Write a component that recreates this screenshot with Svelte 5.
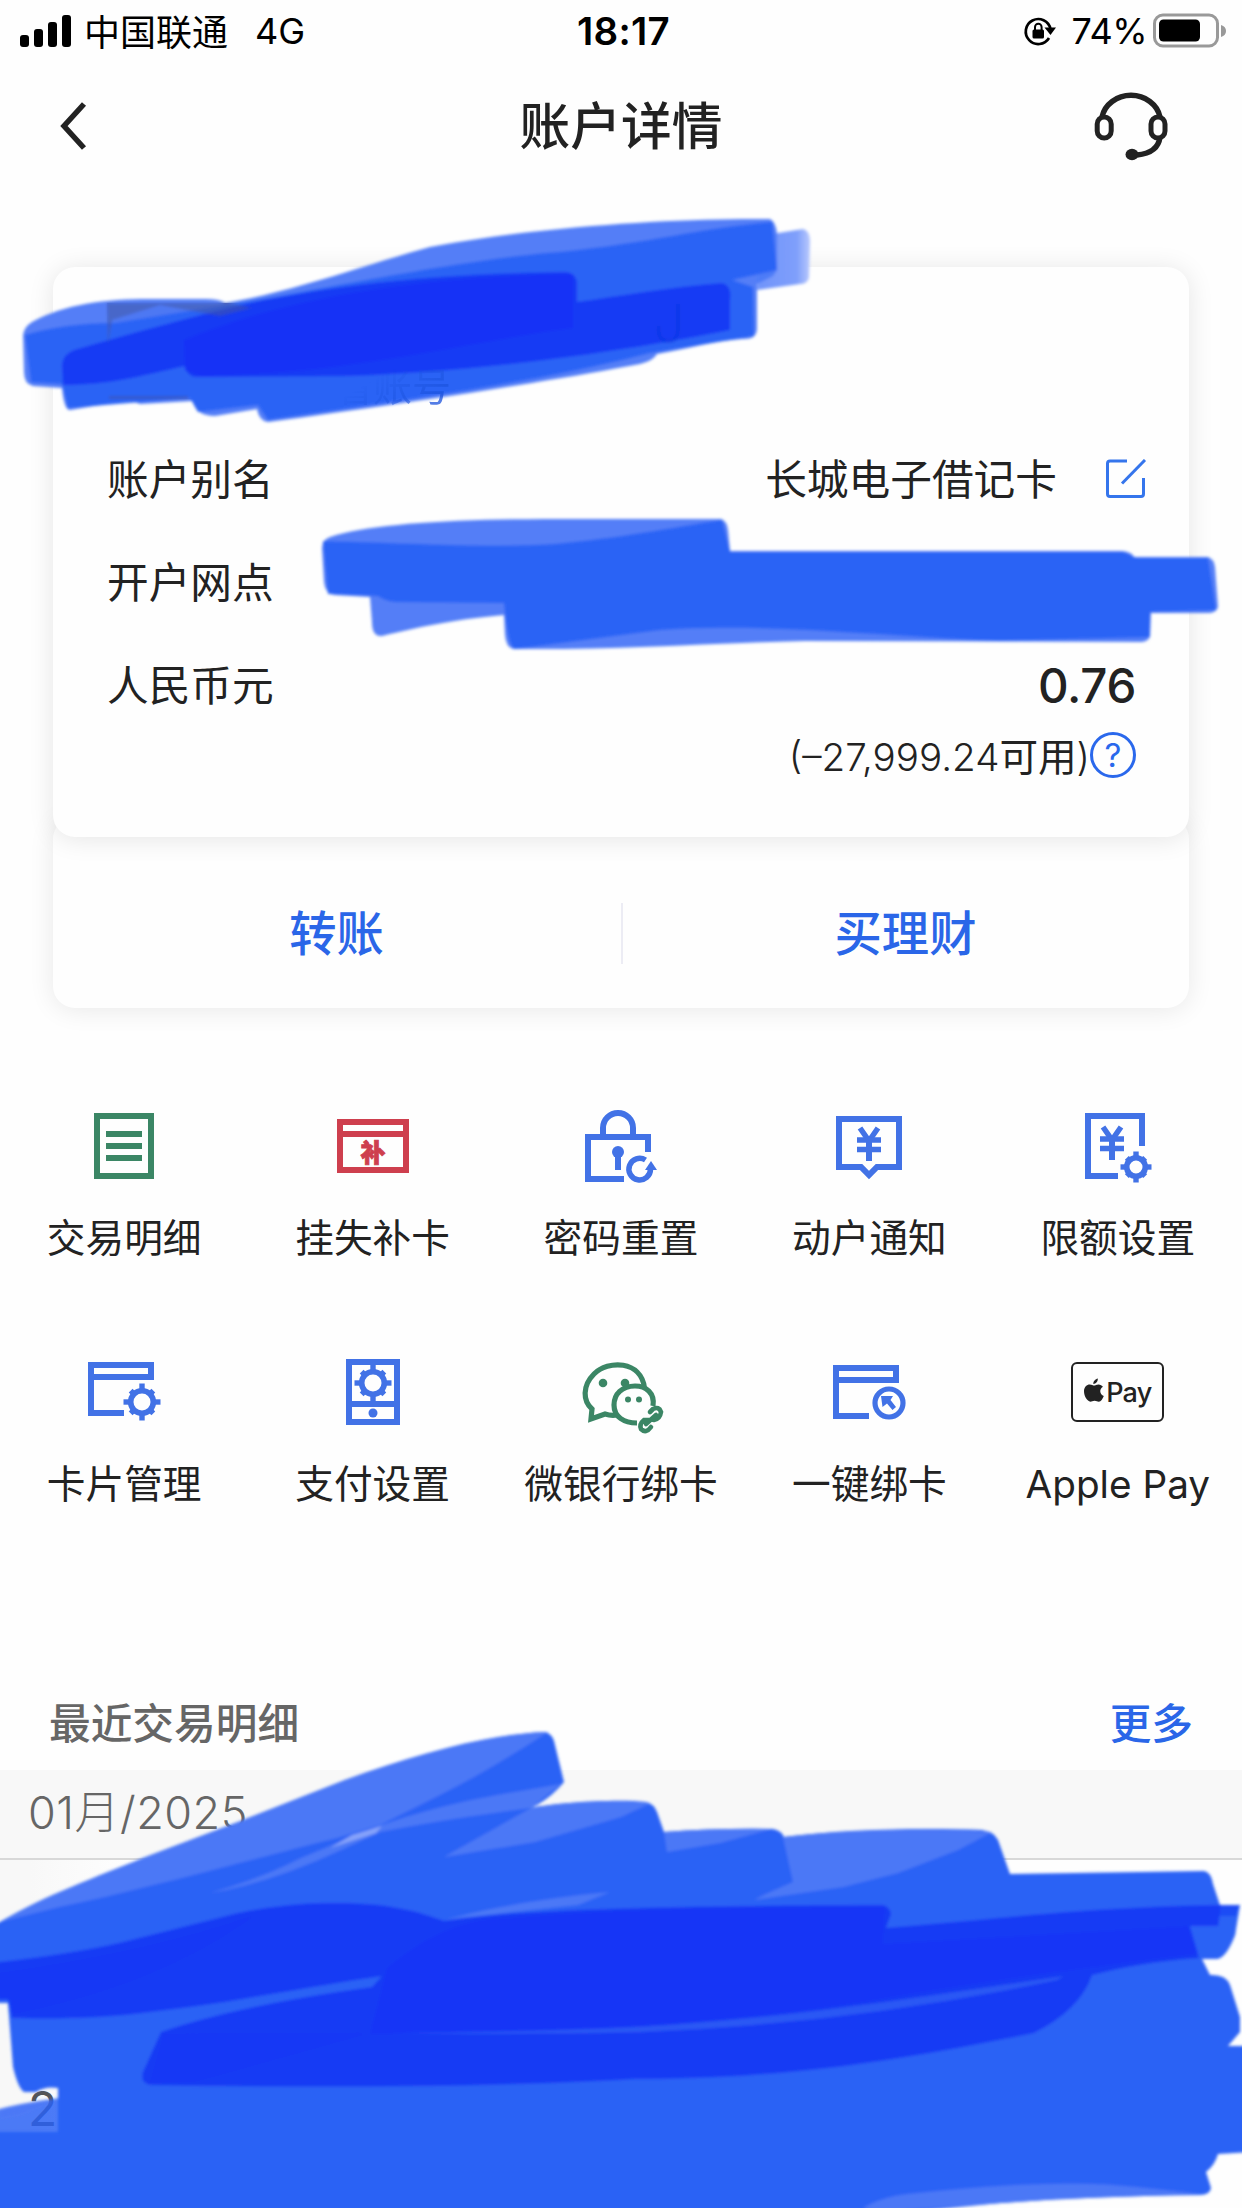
<script lang="ts">
	type Shortcut = { icon: string; label: string };

	const shortcuts: Shortcut[] = [
		{ icon: 'detail', label: '交易明细' },
		{ icon: 'loss', label: '挂失补卡' },
		{ icon: 'reset', label: '密码重置' },
		{ icon: 'notice', label: '动户通知' },
		{ icon: 'limit', label: '限额设置' },
		{ icon: 'card', label: '卡片管理' },
		{ icon: 'payment', label: '支付设置' },
		{ icon: 'wechat', label: '微银行绑卡' },
		{ icon: 'bind', label: '一键绑卡' },
		{ icon: 'apple', label: 'Apple Pay' },
	];

	const teeth = [0, 45, 90, 135, 180, 225, 270, 315];
</script>

{#snippet gear(cx: number, cy: number, r: number, reach: number)}
	<g transform="translate({cx} {cy})">
		<circle {r} stroke-width="5.6" />
		{#each teeth as angle}
			<path
				d="M0 {-r - 1}V{-(angle % 90 ? reach - 2.5 : reach)}"
				stroke-width="5.4"
				transform="rotate({angle})"
			/>
		{/each}
	</g>
{/snippet}

{#snippet yen(x: number, y: number)}
	<g transform="translate({x} {y})">
		<path d="M-9 -1L0 12L9 -1" stroke-width="5.500" />
		<path d="M-12 11H12M-12 20.500H12" stroke-width="5.500" />
		<path d="M0 11V32" stroke-width="6" />
	</g>
{/snippet}

<div class="page">
	<div class="status">
		<div class="carrier">
			<svg width="54" height="32" viewBox="0 0 54 32">
				<rect x="0" y="20" width="9" height="12" rx="3" />
				<rect x="14" y="14" width="9" height="18" rx="3" />
				<rect x="28" y="7" width="9" height="25" rx="3" />
				<rect x="42" y="0" width="9" height="32" rx="3" />
			</svg>
			<span class="operator">中国联通</span>
			<span class="network">4G</span>
		</div>
		<div class="clock">18:17</div>
		<div class="power">
			<svg width="34" height="34" viewBox="0 0 34 34" fill="none" stroke="#000" stroke-width="2.700">
				<path d="M27 24A12.500 12.500 0 1 1 28.500 15" />
				<path d="M22.500 13.500H34L28.500 21Z" fill="#000" stroke="none" />
				<rect x="10.500" y="15.500" width="11.500" height="9" rx="1.500" fill="#000" stroke="none" />
				<path d="M13 16V13a3.300 3.300 0 0 1 6.600 0V16" stroke-width="2" />
			</svg>
			<span>74%</span>
			<svg width="75" height="36" viewBox="0 0 75 36">
				<rect x="2.500" y="2" width="63" height="31" rx="8.500" fill="none" stroke="#999" stroke-width="3" />
				<rect x="7" y="6.500" width="41" height="22" rx="4.500" />
				<path d="M69 12q5 1.500 5 6t-5 6z" fill="#999" />
			</svg>
		</div>
	</div>

	<header class="nav">
		<svg width="32" height="52" viewBox="0 0 32 52" fill="none" stroke="#222" stroke-width="5.500">
			<path d="M25 4L5 26L25 48" />
		</svg>
		<h1>账户详情</h1>
		<svg class="headset" width="76" height="72" viewBox="0 0 76 72" fill="none" stroke="#222">
			<path d="M9 27A29.500 26.500 0 0 1 67 27" stroke-width="5.500" />
			<rect x="4.200" y="27" width="14" height="21" rx="7" stroke-width="5" />
			<rect x="58" y="27" width="14" height="21" rx="7" stroke-width="5" />
			<path d="M67 47Q65 63 44 65" stroke-width="5.500" />
			<ellipse cx="39" cy="64.500" rx="6.500" ry="5.800" fill="#222" stroke="none" />
		</svg>
	</header>

	<section class="account">
		<div class="summary">
			<div class="thumb"></div>
			<span class="reveal">查看账号</span>
		</div>
		<div class="row">
			<span class="name">账户别名</span>
			<span class="alias">
				<span class="name">长城电子借记卡</span>
				<svg width="42" height="42" viewBox="0 0 42 42" fill="none" stroke="#3575ec" stroke-width="3">
					<path d="M22 2H5Q2.500 2 2.500 4.500V35Q2.500 37.500 5 37.500H36Q38.500 37.500 38.500 35V19" />
					<path d="M17 24.500L40 1" />
				</svg>
			</span>
		</div>
		<div class="row"><span class="name">开户网点</span></div>
		<div class="row">
			<span class="name">人民币元</span>
			<span class="amount">0.76</span>
		</div>
		<div class="available">
			<span class="name">(–27,999.24<b>可用</b>)</span>
			<span class="help">?</span>
		</div>
	</section>

	<div class="actions">
		<span>转账</span>
		<i></i>
		<span>买理财</span>
	</div>

	<div class="shortcuts">
		{#each shortcuts as item}
			<div class="shortcut">
				{#if item.icon === 'apple'}
					<div class="apple-slot">
						<div class="apple-pay">
							<svg width="20" height="25" viewBox="0 0 21 25" fill="#222">
								<path d="M14.500 0c.3 3-2 5.700-4.700 5.700C9.500 3 12 .4 14.500 0zM10.700 7.300c1.200 0 2.400-1.200 4.500-1.200 2 0 3.800 1 4.700 2.500-4.200 2.400-3.500 8 .9 9.700-1.200 3-3 5.900-5.200 5.900-1.700 0-2.400-1-4.500-1-2 0-2.900 1-4.400 1C3.500 24.200 0 18.500 0 13.400 0 8.700 3 6.200 6 6.200c2 0 3.500 1.100 4.700 1.100z" />
							</svg>
							<span>Pay</span>
						</div>
					</div>
				{:else}
					<svg class="icon {item.icon}" viewBox="0 0 84 84" fill="none" stroke="currentColor" stroke-width="6">
						{#if item.icon === 'detail'}
							<path d="M15 12H69V72H15ZM24 30H60M24 42H60M24 54H60" />
						{:else if item.icon === 'loss'}
							<path d="M9 18H75V66H9ZM9 30H75" />
							<text x="42" y="58" text-anchor="middle">补</text>
						{:else if item.icon === 'reset'}
							<path d="M24 32V24A15 15 0 0 1 54 24V32" />
							<path d="M69 48V33H9V75H45" />
							<circle cx="39" cy="48" r="6" fill="currentColor" stroke="none" />
							<path d="M39 48V66" />
							<path d="M66.500 56A10.800 10.800 0 1 0 71.500 65" stroke-width="5.500" />
							<path d="M72 57L78 66H66Z" fill="currentColor" stroke="none" />
						{:else if item.icon === 'notice'}
							<path d="M12 15H72V63H50L42 71L34 63H12Z" />
							{@render yen(42, 25)}
						{:else if item.icon === 'limit'}
							<path d="M66 42V12H12V72H42" />
							{@render yen(36, 24)}
							{@render gear(60, 63, 9.3, 15.5)}
						{:else if item.icon === 'card'}
							<path d="M42 63H9V15H69V27H9" />
							{@render gear(60, 52, 11.3, 18.5)}
						{:else if item.icon === 'payment'}
							<path d="M18 12H66V72H18ZM18 54H66" />
							<circle cx="42" cy="63" r="4.500" fill="currentColor" stroke="none" />
							{@render gear(42, 33, 11.3, 18.5)}
						{:else if item.icon === 'wechat'}
							<path d="M65.500 38C62 10 29 10 15 24C3 36 4 51 13 59L12 69L26 64Q32 66 38 65" stroke-width="5.200" />
							<path d="M74 56C76 43 67 36 56 36C43 36 35 44 35 55C35 67 45 73 58 73" stroke-width="5.200" />
							<path d="M71 62L74 59Q80 56 82 62Q81 69 75 70M77 65L67 74M72 70L65 70Q60 74 62 79Q67 84 72 77" stroke-width="4.600" stroke-linecap="round" />
							<g fill="currentColor" stroke="none">
								<circle cx="24" cy="33" r="4.300" /><circle cx="46" cy="33" r="4.300" />
								<circle cx="49" cy="49.500" r="3" /><circle cx="60" cy="49.500" r="3" />
							</g>
						{:else}
							<path d="M42 66H9V18H69V30H9" />
							<circle cx="62" cy="53" r="14" stroke-width="5.200" />
							<path d="M54 46H66L63.500 50L69 57L65.500 60L60 53.500L55.500 57Z" fill="currentColor" stroke="none" />
						{/if}
					</svg>
				{/if}
				<span class="label">{item.label}</span>
			</div>
		{/each}
	</div>

	<section class="recent">
		<div class="recent-head">
			<span>最近交易明细</span>
			<span class="more">更多</span>
		</div>
		<div class="month">01月/2025</div>
		<div class="records"><span>2</span></div>
	</section>

	<!-- marker strokes over the private fields -->
	<svg class="marker" viewBox="0 0 1242 2208">
		<defs>
			<filter id="edge"><feGaussianBlur stdDeviation="1.800" /></filter>
			<linearGradient id="tail">
				<stop offset="0" stop-color="#6f93fa" />
				<stop offset="0.75" stop-color="#7f9ffb" />
				<stop offset="1" stop-color="#b9c9fd" />
			</linearGradient>
		</defs>
		<g filter="url(#edge)">
			<path fill="url(#tail)" d="M760 236L803 229Q811 231 810 245L809 278Q807 284 800 284L757 290Z" />
			<path class="light" d="M23 335Q24 327 32 322C65 304 105 299 150 299H205Q220 299 225 303C290 293 380 260 430 247C540 226 680 218 770 219Q776 222 777 234V270L773 276L757 284L757 330Q756 340 742 339C715 341 690 348 657 354Q653 361 640 364C540 383 400 404 268 422Q259 421 257 409L215 416Q196 416 193 401L140 404L130 400L70 410Q64 410 62 388L33 386Q24 384 24 372Z" />
			<path class="mid" d="M25 335Q65 323 115 323L220 306C310 292 460 259 560 252C650 243 700 228 772 222L777 270L732 280L753 287L754 336L650 353C540 382 400 401 268 420L258 405L198 412L190 398L68 408L62 384L31 382Z" />
			<path class="dark" d="M62 365Q63 354 74 350C120 337 185 318 250 303C340 285 430 274 565 272Q575 272 577 282V302C620 296 670 287 722 283Q732 285 730 300V330C630 350 500 370 350 376L200 377Q187 378 185 366C140 376 110 385 63 385Z" />
			<path class="deep" d="M185 370L184 340C280 300 410 276 573 274V328C480 339 350 375 200 376Z" />
			<path fill="#4355a0" opacity=".5" d="M107 303H230L252 308L220 316L160 305L112 320L108 345Z" />
			<path fill="#4150a0" opacity=".5" d="M109 396H188V399H109Z" />
			<path fill="none" stroke="#0c35df" stroke-width="4" opacity=".5" d="M678 304V328Q678 342 667 341Q657 340 659 326" />

			<path class="light" d="M322 548Q322 540 330 537C370 524 450 519 560 519H721Q727 521 728 530L730 551H1122Q1132 552 1134 557H1208Q1214 559 1215 567L1218 607Q1216 613 1208 613H1151L1150 636Q1149 641 1142 642L804 641C710 643 620 650 513 649Q506 647 505 635L504 615C450 620 420 627 382 636Q372 637 372 622L370 597L335 595Q325 594 324 582Z" />
			<path class="mid" d="M323 541C430 544 490 548 555 544C620 538 670 528 722 520L730 552H1124L1136 558H1208L1216 610L1150 612V637L1000 641C890 637 760 622 660 630L515 649Q508 648 504 603L395 602Q385 601 378 596L328 594Z" />

			<path class="base" d="M-9 1926L0 1922C50 1893 95 1878 143 1858L238 1822L345 1780C420 1753 490 1734 545 1732Q552 1734 554 1741L564 1782Q550 1799 531 1808C560 1802 620 1799 646 1802Q654 1804 657 1812L664 1832Q720 1828 773 1829Q782 1831 784 1837C850 1829 920 1828 982 1830Q994 1832 998 1840L1010 1874L1204 1871Q1211 1872 1213 1884L1220 1905H1240L1235 1935Q1226 1959 1216 1959H1202L1210 1975Q1226 1974 1230 1985L1240 2017V2032L1228 2046H1251V2152L1218 2154Q1215 2165 1206 2172L1211 2188Q1210 2195 1200 2195Q1100 2196 1000 2203L860 2217H-9V2132H58V2088Q45 2086 36 2092H24Q18 2088 13 2067L8 2003H-9Z" />
			<path class="base" opacity=".84" d="M-9 2111Q20 2103 60 2098V2134H-9Z" />
			<path class="tint" d="M0 1922C50 1893 95 1878 143 1858L238 1822L345 1780C420 1753 490 1734 548 1732Q490 1770 436 1797L380 1825L337 1838C240 1862 150 1888 59 1907L15 1918Z" />
			<path class="tint" d="M210 1893Q260 1879 301 1858L376 1827Q440 1804 515 1792L561 1784L531 1808Q450 1818 380 1832L341 1850Q270 1883 210 1893Z" />
			<path fill="#86a3fa" d="M330 1848L352 1835L382 1826L376 1833Z" />
			<path class="tint" d="M531 1808C560 1802 620 1799 651 1803L621 1817L535 1842L444 1857Z" />
			<path class="tint" d="M664 1832Q720 1828 771 1829L720 1843L667 1852ZM783 1837C850 1829 930 1828 992 1832L958 1850L898 1873L843 1887L754 1900L768 1893L793 1882Z" />
			<path class="tint" d="M444 1920Q520 1900 610 1892L578 1905Q500 1913 444 1920ZM863 2208Q885 2195 918 2193Q1060 2178 1136 2187L1203 2194L1057 2199L880 2212ZM0 2110L52 2101L22 2114L0 2118Z" />
			<path class="dark" d="M-9 1964L0 1962Q70 1954 119 1943L238 1913Q290 1902 337 1903C390 1903 420 1912 444 1921C520 1909 650 1906 883 1905Q890 1907 891 1914L886 1928C990 1920 1100 1905 1240 1905L1220 1926H1188L1199 1958C1155 1961 1120 1968 1092 1975Q1080 2010 1034 2033C900 2060 800 2078 634 2079C500 2087 330 2088 150 2085Q140 2083 143 2072L161 2032Q240 2005 372 1987L382 1976C300 1988 230 2003 158 2011C100 2019 50 2019 12 2018L8 1999H-9Z" />
			<path fill="#2962f5" d="M1221 1905H1239L1235 1935Q1226 1957 1214 1958H1200L1189 1927H1218Z" />
			<path class="dark" opacity=".55" d="M1215 1905H1239L1236 1916H1220Z" />
			<path class="deep" d="M370 2034L387 1968Q430 1930 480 1920Q640 1906 885 1907L883 1944L1190 1926L1198 1954Q1000 1978 870 2001Q650 2035 370 2034Z" opacity=".8" />
			<path class="deep" d="M0 1973Q150 1952 255 1915Q160 1985 12 2014V2000H0ZM164 2034L370 2033L190 2083H150Z" opacity=".5" />
			<path fill="#2959f4" d="M385 2033C520 2032 620 2029 680 2024C820 2014 940 1994 1064 1976L1057 1980Q850 2024 640 2032Q500 2035 385 2033Z" />
		</g>
	</svg>
</div>

<style>
	:global(body) {
		background: #fefefe;
	}

	.page {
		position: relative;
		isolation: isolate;
		height: 2208px;
		overflow: hidden;
		background: #fefefe;
		color: #222;
		font-family: Inter, 'Noto Sans CJK SC', sans-serif;
		font-size: 41.7px;
	}

	.status {
		display: grid;
		grid-template-columns: 1fr auto 1fr;
		align-items: center;
		height: 62px;
		padding: 0 15px 0 20px;
		color: #000;
		font-size: 36px;
	}

	.carrier,
	.power {
		display: flex;
		align-items: center;
	}

	.carrier .operator {
		margin-left: 10px;
		padding-bottom: 3px;
	}

	.carrier .network {
		margin-left: 27px;
	}

	.clock {
		font-size: 38.5px;
		font-weight: 600;
		letter-spacing: 0.3px;
	}

	.power {
		justify-content: flex-end;
	}

	.power span {
		margin: 0 5px 0 16px;
		letter-spacing: -0.5px;
	}

	.nav {
		display: flex;
		align-items: center;
		justify-content: space-between;
		height: 128px;
		padding: 0 73px 0 59px;
	}

	.nav h1 {
		margin: 0 0 0 58px;
		padding-bottom: 7px;
		font-size: 50.7px;
		font-weight: 500;
	}

	.headset {
		overflow: visible;
	}

	.account {
		box-sizing: border-box;
		height: 570px;
		margin: 77px 53px 0;
		padding: 0 54px;
		border-radius: 22px;
		background: #fefefe;
		box-shadow: 0 2px 26px rgba(0, 0, 0, 0.1);
	}

	.summary {
		display: flex;
		align-items: flex-end;
		gap: 36px;
		height: 161px;
	}

	.thumb {
		width: 152px;
		height: 96px;
		margin-bottom: 29px;
		background: #5a5f9a;
	}

	/* only the lower edge of the link shows through the marker */
	.reveal {
		position: relative;
		z-index: 3;
		margin-bottom: 17px;
		color: #1b52dc;
		font-size: 39px;
		line-height: 48px;
		opacity: 0.75;
		mask-image: linear-gradient(150deg, transparent 45%, #000 85%);
	}

	.row {
		display: flex;
		align-items: center;
		justify-content: space-between;
		height: 103px;
	}

	.name {
		padding-bottom: 6px;
	}

	.alias {
		display: flex;
		align-items: center;
		gap: 48px;
		margin-right: -12px;
	}

	.amount {
		margin-right: -1px;
		font-size: 47.5px;
		font-weight: 500;
		letter-spacing: -0.3px;
	}

	.available {
		display: flex;
		align-items: center;
		justify-content: flex-end;
		height: 36px;
		margin-right: -1px;
		font-size: 38.6px;
		font-weight: 300;
	}

	.available .name {
		padding-bottom: 3px;
	}

	.available b {
		font-weight: 400;
	}

	.help {
		box-sizing: border-box;
		width: 46px;
		height: 46px;
		border: 3px solid #2a68ec;
		border-radius: 50%;
		color: #2a68ec;
		font-size: 33px;
		font-weight: 400;
		line-height: 41px;
		text-align: center;
	}

	.actions {
		position: relative;
		z-index: -1;
		display: flex;
		align-items: center;
		box-sizing: border-box;
		height: 191px;
		margin: -20px 53px 0;
		padding-top: 42px;
		border-radius: 22px;
		box-shadow: 0 2px 26px rgba(0, 0, 0, 0.09);
		color: #2a66e8;
		font-size: 47.3px;
		font-weight: 500;
	}

	.actions span {
		flex: 1;
		padding-bottom: 6px;
		text-align: center;
	}

	.actions i {
		width: 2px;
		height: 61px;
		margin: 0 -1px 0 1px;
		background: #ececf4;
	}

	.shortcuts {
		display: grid;
		grid-template-columns: repeat(5, 1fr);
		grid-auto-rows: 246px;
		margin-top: 96px;
	}

	.shortcut {
		display: flex;
		flex-direction: column;
		align-items: center;
	}

	.icon {
		width: 84px;
		height: 84px;
		overflow: visible;
		color: #4272e6;
	}

	.icon.detail,
	.icon.wechat {
		color: #3b8665;
	}

	.icon.loss {
		color: #ce3f4e;
	}

	.icon text {
		fill: currentColor;
		stroke: currentColor;
		stroke-width: 0.8;
		font-size: 25px;
		font-weight: 900;
	}

	.apple-slot {
		display: grid;
		place-items: center;
		height: 84px;
	}

	.apple-pay {
		display: flex;
		align-items: center;
		justify-content: center;
		gap: 2px;
		box-sizing: border-box;
		width: 93px;
		height: 60px;
		border: 2.5px solid #222;
		border-radius: 6px;
		font-size: 27px;
		font-weight: 500;
		letter-spacing: -0.8px;
	}

	.apple-pay svg {
		margin-bottom: 3px;
	}

	.label {
		margin-top: 26px;
		font-size: 38.7px;
		line-height: 48px;
		white-space: nowrap;
	}

	.recent {
		margin-top: 80px;
	}

	.recent-head {
		display: flex;
		align-items: center;
		justify-content: space-between;
		box-sizing: border-box;
		height: 94px;
		padding: 0 49px 5px;
		color: #666;
		font-weight: 500;
	}

	.more {
		color: #2a66e8;
	}

	.month {
		box-sizing: border-box;
		height: 90px;
		padding-left: 28px;
		border-bottom: 2.5px solid #d8d8d8;
		background: #f8f8f8;
		color: #666;
		font-size: 45px;
		font-weight: 300;
		letter-spacing: 0.5px;
		line-height: 86px;
	}

	.records {
		box-sizing: border-box;
		height: 348px;
		padding: 219px 0 0 28px;
		background: linear-gradient(90deg, #f8f8f8 30px, #fefefe 130px);
		color: #555;
		font-size: 48px;
	}

	.marker {
		position: absolute;
		inset: 0;
		z-index: 2;
		width: 1242px;
		height: 2208px;
		pointer-events: none;
	}

	.light {
		fill: #4c7af7;
		fill-opacity: 0.96;
	}

	.mid {
		fill: #2962f5;
		fill-opacity: 0.96;
	}

	.base {
		fill: #2962f5;
	}

	.tint {
		fill: #4b78f6;
	}

	.dark {
		fill: #173bf4;
	}

	.deep {
		fill: #1433f6;
	}
</style>
